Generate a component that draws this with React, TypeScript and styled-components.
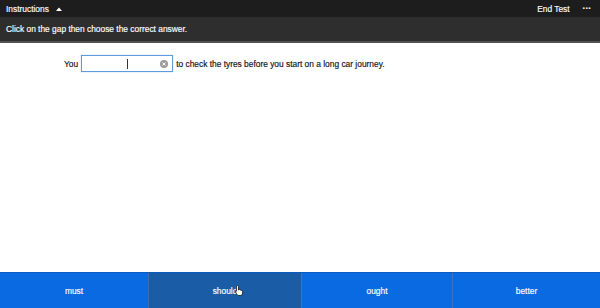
import styled, { createGlobalStyle } from "styled-components";

const GlobalStyle = createGlobalStyle`
  html, body {
    margin: 0;
    padding: 0;
    background: #ffffff;
    font-family: "Liberation Sans", Arial, sans-serif;
  }
  #root {
    height: 308px;
  }
`;

const Page = styled.div`
  display: flex;
  flex-direction: column;
  height: 308px;
  width: 600px;
  overflow: hidden;
  -webkit-text-stroke: 0.15px currentColor;
`;

const TopBar = styled.div`
  display: flex;
  align-items: center;
  justify-content: space-between;
  height: 17px;
  padding: 0 9px 0 6px;
  background: #1d1d1d;
  color: #ffffff;
  font-size: 8.4px;
`;

const MenuLabel = styled.div`
  display: flex;
  align-items: center;
  gap: 7px;
`;

const RightGroup = styled.div`
  display: flex;
  align-items: center;
  gap: 13px;
`;

const Dots = styled.span`
  font-size: 9px;
  letter-spacing: 0.3px;
  font-weight: bold;
  line-height: 1;
  margin-top: -4px;
`;

const InstructionBar = styled.div`
  height: 24px;
  display: flex;
  align-items: center;
  padding: 0 6px;
  background: #2e2e2e;
  border-bottom: 2px solid #525252;
  color: #ffffff;
  font-size: 8.4px;
`;

const Content = styled.div`
  flex: 1;
  padding: 12px 0 0 64px;
`;

const Sentence = styled.div`
  display: flex;
  align-items: center;
  gap: 3px;
  font-size: 8.4px;
  color: #111111;
`;

const GapInput = styled.div`
  position: relative;
  width: 86px;
  height: 15px;
  border: 1px solid #5f9bdc;
  box-shadow: 0 0 1px rgba(95, 155, 220, 0.6);
  background: #ffffff;
  display: flex;
  align-items: center;
  justify-content: flex-end;
  padding-right: 4px;
  box-sizing: content-box;
`;

const Caret = styled.span`
  position: absolute;
  left: 45px;
  top: 3px;
  width: 1px;
  height: 10px;
  background: #333333;
`;

const ClearButton = styled.span`
  width: 8px;
  height: 8px;
  border-radius: 50%;
  background: #9a9a9a;
  display: flex;
  align-items: center;
  justify-content: center;
`;

const Answers = styled.div`
  display: grid;
  grid-template-columns: 148px 153px 151px 148px;
  height: 35px;
  border-top: 1px solid #0b5cc0;
`;

const Answer = styled.div<{ $active?: boolean }>`
  position: relative;
  display: flex;
  align-items: center;
  justify-content: center;
  background: ${(p) => (p.$active ? "#1b5ca6" : "#0a6ae1")};
  border-left: 1px solid ${(p) => (p.$active ? "#3a6fae" : "#3b74c0")};
  color: #ffffff;
  font-size: 8.4px;
  &:first-child {
    border-left: none;
  }
`;

const Pointer = styled.svg`
  position: absolute;
  left: 86px;
  top: 12px;
  -webkit-text-stroke: 0;
`;

export default function App() {
  return (
    <Page>
      <GlobalStyle />
      <TopBar>
        <MenuLabel>
          Instructions
          <svg width="6" height="4" viewBox="0 0 6 4">
            <path d="M0 4 L3 0.5 L6 4 Z" fill="#ffffff" />
          </svg>
        </MenuLabel>
        <RightGroup>
          <span>End Test</span>
          <Dots>...</Dots>
        </RightGroup>
      </TopBar>
      <InstructionBar>Click on the gap then choose the correct answer.</InstructionBar>
      <Content>
        <Sentence>
          <span>You</span>
          <GapInput>
            <Caret />
            <ClearButton>
              <svg width="6" height="6" viewBox="0 0 6 6">
                <path d="M1.5 1.5 L4.5 4.5 M4.5 1.5 L1.5 4.5" stroke="#ffffff" strokeWidth="1" />
              </svg>
            </ClearButton>
          </GapInput>
          <span>to check the tyres before you start on a long car journey.</span>
        </Sentence>
      </Content>
      <Answers>
        <Answer>must</Answer>
        <Answer $active>
          should
          <Pointer width="9" height="11" viewBox="0 0 9 11">
            <path
              d="M2.5 0.5 C3.2 0.5 3.5 1 3.5 1.6 L3.5 5 L4 4.6 C4.6 4.4 5.1 4.6 5.3 5 C5.8 4.8 6.3 5 6.5 5.4 C7.1 5.3 7.6 5.7 7.6 6.3 L7.6 8 C7.6 9.5 6.6 10.5 5.2 10.5 L4 10.5 C3 10.5 2.3 10 1.8 9.2 L0.6 7.1 C0.3 6.6 0.5 6.1 1 6 C1.3 5.9 1.6 6.1 1.5 6.2 L1.5 1.6 C1.5 1 1.8 0.5 2.5 0.5 Z"
              fill="#ffffff"
              stroke="#111111"
              strokeWidth="0.8"
            />
          </Pointer>
        </Answer>
        <Answer>ought</Answer>
        <Answer>better</Answer>
      </Answers>
    </Page>
  );
}
